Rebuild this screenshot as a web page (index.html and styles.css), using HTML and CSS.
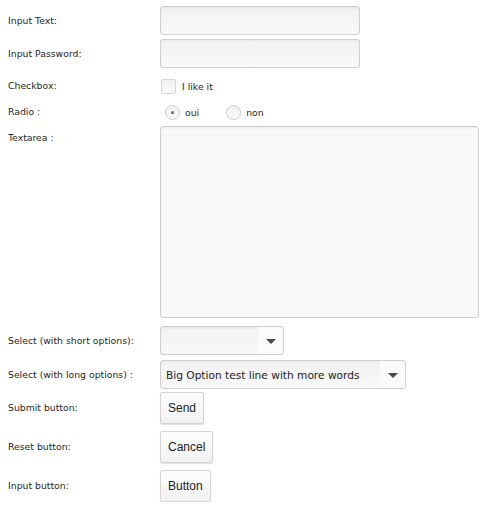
FILE: index.html
```html
<!DOCTYPE html>
<html>
<head>
<meta charset="utf-8">
<link rel="stylesheet" href="styles.css">
</head>
<body>
<form class="form">
  <div class="row r1">
    <label class="lbl">Input Text:</label>
    <input class="field text" type="text">
  </div>
  <div class="row r2">
    <label class="lbl">Input Password:</label>
    <input class="field text" type="password">
  </div>
  <div class="row r3">
    <label class="lbl">Checkbox:</label>
    <span class="choice"><span class="check"></span><span class="opt">I like it</span></span>
  </div>
  <div class="row r4">
    <label class="lbl">Radio :</label>
    <span class="choice"><span class="radio on"></span><span class="opt">oui</span></span>
    <span class="choice second"><span class="radio"></span><span class="opt">non</span></span>
  </div>
  <div class="row r5 top">
    <label class="lbl lbl-top">Textarea :</label>
    <div class="field area"></div>
  </div>
  <div class="row r6">
    <label class="lbl">Select (with short options):</label>
    <div class="field select short"><span class="sel-text"></span><span class="arrow-box"><span class="arrow"></span></span></div>
  </div>
  <div class="row r7">
    <label class="lbl">Select (with long options) :</label>
    <div class="field select long"><span class="sel-text">Big Option test line with more words</span><span class="arrow-box"><span class="arrow"></span></span></div>
  </div>
  <div class="row r8">
    <label class="lbl">Submit button:</label>
    <button class="btn" type="button">Send</button>
  </div>
  <div class="row r9">
    <label class="lbl">Reset button:</label>
    <button class="btn" type="button">Cancel</button>
  </div>
  <div class="row r10">
    <label class="lbl">Input button:</label>
    <button class="btn" type="button">Button</button>
  </div>
</form>
</body>
</html>
```
FILE: styles.css
```css
html, body {
  margin: 0;
  padding: 0;
  background: #ffffff;
}
body {
  font-family: "DejaVu Sans", Verdana, sans-serif;
  font-size: 9.3px;
  color: #262626;
}
.form {
  display: flex;
  flex-direction: column;
  padding: 6px 8px 0 8px;
}
.row {
  display: flex;
  align-items: center;
}
.row.top { align-items: flex-start; }
.r1 { height: 29px; }
.r2 { height: 29px; margin-top: 4px; }
.r3 { height: 24px; margin-top: 6px; }
.r4 { height: 24px; margin-top: 2px; }
.r5 { height: 192px; margin-top: 2px; }
.r6 { height: 29px; margin-top: 8px; }
.r7 { height: 29px; margin-top: 5px; }
.r8 { height: 32px; margin-top: 3px; }
.r9 { height: 32px; margin-top: 7px; }
.r10 { height: 32px; margin-top: 7px; }

.lbl {
  width: 152px;
  flex: none;
  line-height: 12px;
}
.lbl-top { padding-top: 6px; }

.field {
  box-sizing: border-box;
  border: 1px solid #cfcfcf;
  border-radius: 3px;
  background: linear-gradient(#f2f2f2, #f9f9f9);
  box-shadow: inset 0 1px 2px rgba(0,0,0,0.05);
  margin: 0;
}
.text {
  width: 200px;
  height: 29px;
  padding: 0 6px;
  font: inherit;
  outline: none;
}
.area {
  width: 319px;
  height: 192px;
  background: #f8f8f8;
}
.choice {
  display: inline-flex;
  align-items: center;
}
.check {
  box-sizing: border-box;
  width: 15px;
  height: 15px;
  margin-left: 1px;
  border: 1px solid #d6d6d6;
  border-radius: 2px;
  background: linear-gradient(#f2f2f2, #fafafa);
}
.check + .opt { margin-left: 6px; }
.radio {
  box-sizing: border-box;
  width: 15px;
  height: 15px;
  margin-left: 5px;
  border: 1px solid #cdcdcd;
  border-radius: 50%;
  background: linear-gradient(#f0f0f0, #fafafa);
  display: flex;
  align-items: center;
  justify-content: center;
}
.radio.on::after {
  content: "";
  width: 3px;
  height: 3px;
  border-radius: 50%;
  background: #666;
}
.radio + .opt { margin-left: 5px; }
.second { margin-left: 27px; }
.second .radio { margin-left: 0; }

.select {
  height: 29px;
  display: flex;
  align-items: stretch;
  background: linear-gradient(#f2f2f2, #f8f8f8);
}
.short { width: 124px; }
.long { width: 246px; }
.sel-text {
  flex: 1;
  display: flex;
  align-items: center;
  padding-left: 5px;
  font-size: 10.6px;
  color: #222;
  white-space: nowrap;
}
.arrow-box {
  width: 25px;
  background: #fbfbfb;
  border-radius: 0 3px 3px 0;
  display: flex;
  align-items: center;
  justify-content: center;
}
.arrow {
  width: 0;
  height: 0;
  border-left: 5px solid transparent;
  border-right: 5px solid transparent;
  border-top: 5px solid #4a4a4a;
  margin-top: 1px;
}
.btn {
  box-sizing: border-box;
  height: 32px;
  padding: 0 7px 1px 7px;
  margin: 0;
  font-family: "Liberation Sans", Arial, sans-serif;
  font-size: 12px;
  color: #222;
  border: 1px solid #d4d4d4;
  border-radius: 2px;
  background: linear-gradient(#fdfdfd, #f1f1f1);
  box-shadow: 0 1px 1px rgba(0,0,0,0.12);
}
```
